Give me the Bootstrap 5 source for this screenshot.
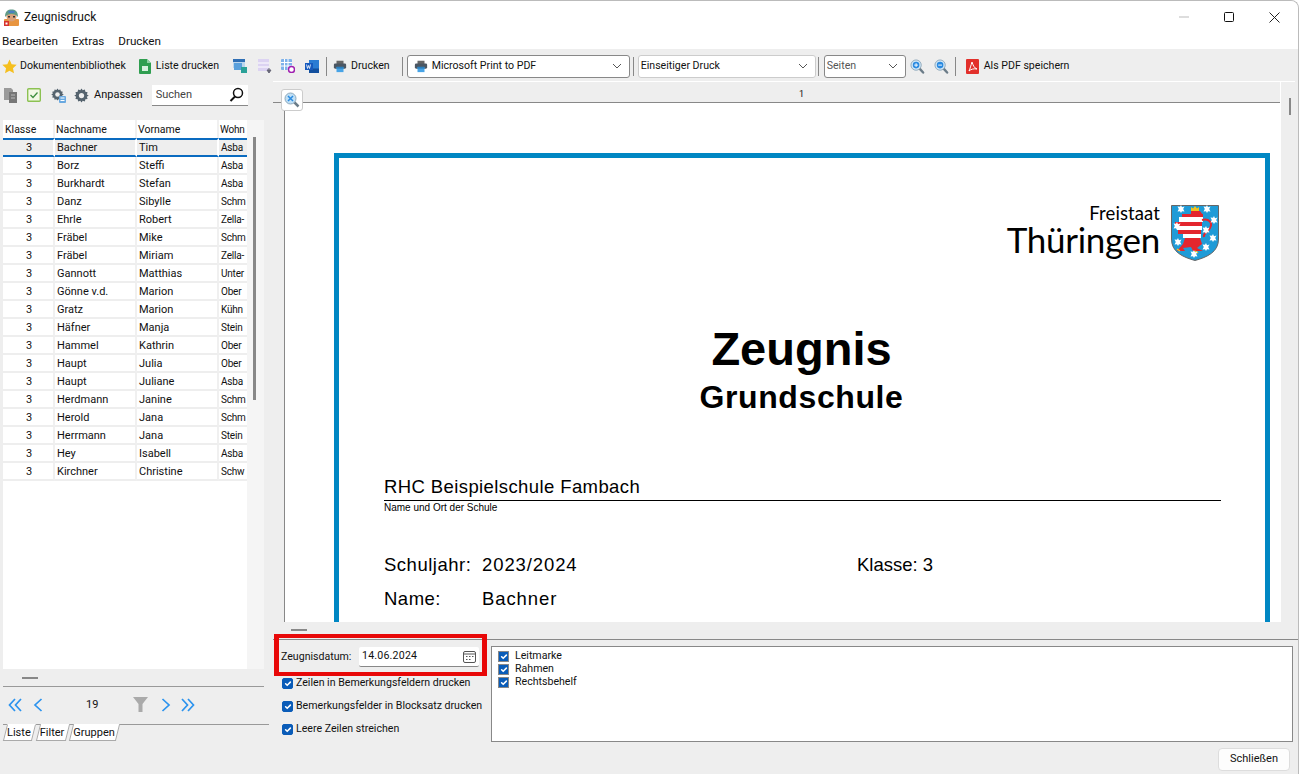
<!DOCTYPE html>
<html lang="de">
<head>
    <meta charset="UTF-8">
    <title>Zeugnisdruck</title>
    <link href="https://cdn.jsdelivr.net/npm/bootstrap@5.3.0/dist/css/bootstrap.min.css" rel="stylesheet">
    <style>
        html, body { height: 100%; overflow: hidden; background: #fff; }
        body { font-family: Roboto, "Liberation Sans", sans-serif; font-size: 11px; color: #111; line-height: 1.2; }
        svg { display: block; flex: none; }
        .app-window { width: 1299px; height: 774px; background: #eee; border-top: 1px solid #bbb; border-right: 1px solid #bbb; border-top-right-radius: 8px; overflow: hidden; }
        .title-bar { height: 32px; background: #fff; padding-left: 3px; font-size: 12px; flex: none; }
        .title-bar span { margin-left: 4px; }
        .win-btns { margin-left: auto; gap: 35px; padding-right: 18px; }
        .menu-bar { height: 16px; background: #fff; padding-left: 2px; gap: 14px; font-size: 11.700px; flex: none; }
        .tool-bar { height: 32px; padding: 2px 0 0 2px; flex: none; font-size: 10.600px; }
        .tool-sep { width: 1px; height: 19px; background: #888; }
        .fake-select { height: 23px; background: #fff; border: 1px solid #888; border-radius: 3px; padding: 0 7px 0 6px; }
        .fake-select.soft { border-color: #ccc; padding-left: 2px; }
        .fake-select .chev { margin-left: auto; }
        .work-area { height: 693px; }
        .left-pane { width: 272px; flex: none; padding: 0 0 0 3px; }
        .left-tools { height: 39px; padding: 1px 0 12px; }
        .search-box { width: 96px; height: 21px; margin-left: 9px; background: #fff; border-bottom: 1px solid #888; padding: 0 4px; color: #444; }
        .search-box svg { margin-left: auto; }
        .list-box { width: 261px; height: 549px; background: #fff; position: relative; overflow: hidden; }
        .list-track { position: absolute; left: 244px; top: 0; bottom: 0; width: 17px; background: #f5f5f5; }
        .list-thumb { position: absolute; left: 250px; top: 17px; width: 3px; height: 263px; background: #888; }
        .pupil-table { width: 244px; table-layout: fixed; margin: 0; border-collapse: separate; border-spacing: 0; --bs-table-bg: transparent; }
        .pupil-table th, .pupil-table td { padding: 1px 0 0 1px; height: 18px; font-size: 10.500px; font-weight: 400; line-height: 15px; white-space: nowrap; overflow: hidden; color: #111; border-bottom: 2px solid #f0f0f0; border-right: 2px solid #f0f0f0; vertical-align: middle; }
        .pupil-table td { border-bottom-color: #eee; padding-left: 2px; font-size: 11px; }
        .pupil-table th { border-bottom: 0; }
        .pupil-table th:first-child { padding-left: 2px; }
        .pupil-table td:first-child { text-align: center; }
        .pupil-table th:last-child, .pupil-table td:last-child { font-size: 10px; border-right: 0; letter-spacing: -.2px; }
        .pupil-table tr.sel td { background: #eee; padding-top: 0; border-top: 2px solid #0a6bc0; border-bottom: 2px solid #0a6bc0; border-right-color: #fff; height: 19px; line-height: 14px; }
        .split-foot { width: 261px; height: 18px; border-bottom: 1px solid #999; padding-left: 19px; flex: none; }
        .split-grip { width: 16px; height: 2px; background: #888; }
        .pager { width: 261px; height: 37px; position: relative; flex: none; }
        .pager b { font-weight: 400; position: absolute; left: 83px; top: 11px; }
        .pager svg { position: absolute; top: 10px; }
        .tab-strip { height: 18px; border-top: 1px solid #999; padding-left: 3px; gap: 7px; margin-right: 3px; flex: none; }
        .tab-shape { position: relative; padding: 0 1px; height: 16px; line-height: 15px; z-index: 0; }
        .tab-shape::before { content: ""; position: absolute; inset: -1px -2px 0 -1px; background: #fff; border: 1px solid #aaa; border-top: 0; transform: skewX(-14deg); z-index: -1; }
        .tab-shape.on::before { border-top: 1px solid #fff; }
        .right-pane { flex: 1; min-width: 0; padding-left: 1px; }
        .preview-box { height: 541px; background: #fff; border-top: 1px solid #fff; position: relative; overflow: hidden; margin-right: 3px; flex: none; }
        .preview-left { width: 12px; background: #eee; border-right: 1px solid #888; flex: none; }
        .ruler-top { height: 22px; background: #eee; border-bottom: 1px solid #888; margin-right: 15px; font-size: 9px; text-align: center; padding: 7px 0 0 50px; line-height: 11px; }
        .preview-scroll { width: 15px; background: #eee; flex: none; border-left: 1px solid #fff; position: relative; margin-top: -22px; }
        .preview-scroll i { position: absolute; left: 8px; top: 17px; width: 2px; height: 17px; background: #888; }
        .zoom-fit { position: absolute; left: 8px; top: 7px; width: 22px; height: 22px; background: #fff; border: 1px solid #ccc; border-radius: 3px; padding: 2px; z-index: 1; }
        .doc-page { margin: 50px 0 0 49px; width: 936px; height: 520px; border: 5px solid #0087c3; padding: 47px 46px 0 45px; color: #000; font-family: "Liberation Sans", sans-serif; }
        .state-logo { height: 56px; }
        .state-words { text-align: right; margin-right: 11px; font-family: Lato, "Liberation Sans", sans-serif; }
        .state-words small { display: block; font-size: 18.500px; line-height: 16px; font-weight: 400; letter-spacing: .1px; }
        .state-words strong { display: block; font-size: 35px; line-height: 36px; font-weight: 400; letter-spacing: -.3px; }
        .doc-title { font-size: 47px; font-weight: 700; line-height: 56px; text-align: center; margin-top: 60px; }
        .doc-sub { font-size: 32px; font-weight: 700; line-height: 38px; text-align: center; letter-spacing: .6px; margin-top: 1px; }
        .school-line { font-size: 18.500px; line-height: 24px; margin: 59px -2px 0 0; border-bottom: 1px solid #000; height: 26px; padding-top: 0; letter-spacing: .4px; }
        .school-note { font-size: 10px; line-height: 14px; }
        .doc-row { font-size: 18.500px; line-height: 24px; height: 34px; letter-spacing: .5px; }
        .doc-row .lbl { width: 98px; }
        .doc-row .val { width: 375px; letter-spacing: .9px; }
        .doc-row .kl { letter-spacing: 0; }
        .split-bar { height: 18px; border-bottom: 1px solid #888; padding: 0 0 1px 18px; flex: none; }
        .bottom-area { height: 134px; position: relative; flex: none; font-size: 10.600px; }
        .opts-col { width: 218px; padding: 7px 0 0 9px; flex: none; }
        .red-frame { position: absolute; left: 1px; top: -6px; width: 213px; height: 42px; border: 4px solid #e80808; border-left-width: 5px; border-right-width: 5px; pointer-events: none; }
        .date-row { height: 20px; margin-bottom: 5px; margin-left: -1px; }
        .date-label { width: 78px; flex: none; }
        .date-input { width: 120px; height: 20px; background: #fff; border-bottom: 1px solid #888; border-radius: 2px; padding: 0 3px; letter-spacing: .2px; }
        .date-input svg { margin-left: auto; }
        .opt-check { height: 23px; white-space: nowrap; margin: 0; padding: 0; min-height: 0; gap: 3px; }
        .form-check-input.tick { width: 11px; height: 11px; margin: 0; float: none; flex: none; border-radius: 2px; background-color: #0a5cb8; border-color: #0a5cb8; background-size: 10px; }
        .form-check-input.tick.box { border-radius: 0; border-color: #888; background-color: #0a5cb8; }
        .mark-box { position: absolute; left: 218px; top: 6px; width: 802px; height: 96px; background: #fff; border: 1px solid #888; padding: 3px 6px; }
        .mark-box .opt-check { height: 13px; gap: 6px; }
        .close-btn { position: absolute; right: 8px; top: 108px; width: 72px; height: 23px; font-size: 11px; padding: 0; background: #fdfdfd; border: 1px solid #ddd; border-radius: 4px; color: #111; }
    </style>
</head>
<body>
<svg width="0" height="0" style="position:absolute">
    <defs>
        <symbol id="ic-printer" viewBox="0 0 16 16"><rect x="4" y="2" width="8" height="4" fill="#666"/><rect x="1" y="5" width="14" height="6" rx="1.500" fill="#4b5763"/><rect x="4" y="9" width="8" height="6" fill="#47a3e6"/><rect x="4" y="9" width="8" height="2" fill="#2b7fbd"/></symbol>
        <symbol id="ic-chev" viewBox="0 0 10 6"><path d="M1 1l4 4 4-4" fill="none" stroke="#555"/></symbol>
        <symbol id="ic-mag-plus" viewBox="0 0 16 16"><path d="M10 10l4 4.500" stroke="#6b7c88" stroke-width="2.500" stroke-linecap="round"/><circle cx="6.500" cy="6.500" r="5.500" fill="#cfe6f7" stroke="#8fa9bb"/><circle cx="6.500" cy="6.500" r="3.500" fill="#2a8ae0"/><path d="M4.500 6.500h4M6.500 4.500v4" stroke="#fff"/></symbol>
        <symbol id="ic-mag-minus" viewBox="0 0 16 16"><path d="M10 10l4 4.500" stroke="#6b7c88" stroke-width="2.500" stroke-linecap="round"/><circle cx="6.500" cy="6.500" r="5.500" fill="#cfe6f7" stroke="#8fa9bb"/><circle cx="6.500" cy="6.500" r="3.500" fill="#2a8ae0"/><path d="M4.500 6.500h4" stroke="#fff"/></symbol>
        <symbol id="ic-gear" viewBox="0 0 16 16"><path d="M8 .5l1.300 2 2.300-.8.500 2.400 2.400.5-.8 2.300 2 1.100-2 1.300.8 2.300-2.400.5-.5 2.400-2.300-.8L8 15.500l-1.300-1.800-2.300.8-.5-2.400-2.400-.5.800-2.300-2-1.300 2-1.100-.8-2.300 2.400-.5.500-2.400 2.300.8z" fill="#55636e"/><circle cx="8" cy="8" r="2.800" fill="#eee"/></symbol>
        <symbol id="ic-dbl" viewBox="0 0 14 16"><path d="M7 2L1.500 8 7 14M13 2L7.500 8 13 14" fill="none" stroke="#2b93ee" stroke-width="1.700"/></symbol>
        <symbol id="ic-one" viewBox="0 0 10 16"><path d="M8.500 2L2 8l6.500 6" fill="none" stroke="#2b93ee" stroke-width="1.700"/></symbol>
        <symbol id="ic-star6" viewBox="-4 -4 8 8"><path d="M0-4l1 2.300L3.500-2.500 2.200 0l1.300 2.500L1 2.300 0 4-1 2.300-3.500 2.500-2.200 0-3.500-2.500-1-2.300z" fill="#fff"/></symbol>
    </defs>
</svg>

<div class="app-window d-flex flex-column">
    <div class="title-bar d-flex align-items-center">
        <svg width="17" height="17" viewBox="0 0 17 17"><rect x="1" y="10" width="15" height="7" rx="1" fill="#e8953f"/><circle cx="8.500" cy="7.500" r="5" fill="#d9a07a"/><path d="M2 8C2 2 5 .5 8.500 .5S15 2 15 8C12 4 5 4 2 8z" fill="#5f9a86"/><path d="M5 2.500C7 1 10 1 12 2.500L11 4H6z" fill="#4a7fc0"/><rect x="5" y="7" width="2" height="1.500" fill="#333"/><rect x="10" y="7" width="2" height="1.500" fill="#333"/><rect x="1" y="12" width="5" height="5" fill="#d6322c"/><rect x="2.500" y="13.500" width="2" height="2" fill="#fff"/></svg>
        <span>Zeugnisdruck</span>
        <div class="win-btns d-flex align-items-center">
            <svg width="10" height="10" viewBox="0 0 10 10"><path d="M0 5h10" stroke="#bbb"/></svg>
            <svg width="10" height="10" viewBox="0 0 10 10"><rect x=".5" y=".5" width="9" height="9" rx="1" fill="none" stroke="#111"/></svg>
            <svg width="11" height="11" viewBox="0 0 11 11"><path d="M.5 .5l10 10M10.500 .5l-10 10" stroke="#222"/></svg>
        </div>
    </div>
    <div class="menu-bar d-flex align-items-center">
        <span>Bearbeiten</span><span>Extras</span><span>Drucken</span>
    </div>

    <div class="tool-bar d-flex align-items-center">
        <svg width="15" height="15" viewBox="0 0 16 16"><path d="M8 .5l2.300 5 5.400.6-4 3.700 1.100 5.400L8 12.500l-4.800 2.700 1.100-5.400-4-3.700 5.400-.6z" fill="#f5bf1e"/></svg>
        <span style="margin-left:3px">Dokumentenbibliothek</span>
        <svg width="12" height="15" viewBox="0 0 12 15" style="margin-left:13px"><path d="M0 1a1 1 0 011-1h7l4 4v10a1 1 0 01-1 1H1a1 1 0 01-1-1z" fill="#2f9e50"/><path d="M8 0l4 4H8z" fill="#8dd0a2"/><rect x="3" y="7" width="6" height="5" fill="#d7f0de"/></svg>
        <span style="margin-left:5px">Liste drucken</span>
        <svg width="14" height="14" viewBox="0 0 14 14" style="margin-left:14px"><rect y="0" width="12" height="3" fill="#2f6fb5"/><rect y="3" width="12" height="6" fill="#bcd6ee"/><rect x="1" y="4" width="8" height="7" fill="#5aa0dc"/><rect x="8" y="8" width="6" height="6" fill="#2aa198"/></svg>
        <svg width="14" height="14" viewBox="0 0 14 14" style="margin-left:11px"><rect width="11" height="12" fill="#dcd3f2"/><path d="M0 4h11M0 8h11" stroke="#fff"/><path d="M11 9v3M9 11l2 3 2-3z" fill="#667" stroke="#667"/></svg>
        <svg width="14" height="14" viewBox="0 0 14 14" style="margin-left:9px"><rect width="11" height="11" rx="1" fill="#7fb2ea"/><path d="M0 3.500h11M0 7h11M3.500 0v11M7 0v11" stroke="#fff"/><circle cx="10.500" cy="10.500" r="3" fill="#fff" stroke="#a020b0" stroke-width="1.500"/></svg>
        <svg width="14" height="13" viewBox="0 0 14 13" style="margin-left:10px"><rect x="4" width="10" height="13" fill="#2b7cd3"/><rect x="4" y="8.500" width="10" height="4.500" fill="#124f9e"/><rect y="3" width="8" height="7" fill="#185abd"/><path d="M1.500 4.500l1 4 1-3 1 3 1-4" fill="none" stroke="#fff" stroke-width=".8"/></svg>
        <div class="tool-sep" style="margin-left:7px"></div>
        <svg width="14" height="14" style="margin-left:6px"><use href="#ic-printer"/></svg>
        <span style="margin-left:4px">Drucken</span>
        <div class="tool-sep" style="margin-left:12px"></div>
        <div class="fake-select d-flex align-items-center" style="margin-left:4px;width:223px">
            <svg width="14" height="14" class="me-1"><use href="#ic-printer"/></svg>Microsoft Print to PDF
            <svg class="chev" width="10" height="6"><use href="#ic-chev"/></svg>
        </div>
        <div class="tool-sep" style="margin-left:3px"></div>
        <div class="fake-select soft d-flex align-items-center" style="margin-left:4px;width:178px">Einseitiger Druck
            <svg class="chev" width="10" height="6"><use href="#ic-chev"/></svg>
        </div>
        <div class="tool-sep" style="margin-left:2px"></div>
        <div class="fake-select d-flex align-items-center" style="margin-left:5px;width:82px;padding-left:2px;color:#555">Seiten
            <svg class="chev" width="10" height="6"><use href="#ic-chev"/></svg>
        </div>
        <svg width="15" height="15" style="margin-left:4px"><use href="#ic-mag-plus"/></svg>
        <svg width="15" height="15" style="margin-left:9px"><use href="#ic-mag-minus"/></svg>
        <div class="tool-sep" style="margin-left:6px"></div>
        <svg width="13" height="15" viewBox="0 0 13 15" style="margin-left:10px"><rect width="13" height="15" rx="1" fill="#e2302b"/><path d="M6 3c1 3 2 6 5 7-3-.5-6 0-8 2 1-2 2-6 3-9z" fill="none" stroke="#fff"/></svg>
        <span style="margin-left:5px">Als PDF speichern</span>
    </div>

    <div class="work-area d-flex">
        <div class="left-pane d-flex flex-column">
            <div class="left-tools d-flex align-items-center">
                <svg width="15" height="15" viewBox="0 0 15 15"><path d="M1 0h7l2 2v10H1z" fill="#9a9a9a"/><rect x="6" y="4" width="8" height="11" fill="#777"/><path d="M8 7h4M8 10h4" stroke="#bbb"/></svg>
                <svg width="14" height="14" viewBox="0 0 14 14" style="margin-left:9px"><rect x=".7" y=".7" width="12.600" height="12.600" rx="1" fill="#f2f8e6" stroke="#8cc152" stroke-width="1.400"/><path d="M3.500 7l2.500 2.500 4.500-5" fill="none" stroke="#3f8f3f" stroke-width="1.300"/></svg>
                <svg width="15" height="15" viewBox="0 0 15 15" style="margin-left:10px"><use href="#ic-gear" width="13" height="13"/><rect x="8" y="8" width="7" height="7" rx="1" fill="#6aa9e0"/><path d="M9.500 10h4M9.500 12.500h4" stroke="#fff"/></svg>
                <svg width="15" height="15" style="margin-left:8px"><use href="#ic-gear"/></svg>
                <span style="margin-left:5px">Anpassen</span>
                <div class="search-box d-flex align-items-center">Suchen
                    <svg width="15" height="15" viewBox="0 0 15 15"><circle cx="9" cy="6" r="4.500" fill="none" stroke="#111" stroke-width="1.500"/><path d="M6 9.500L1.500 14" stroke="#111" stroke-width="2"/></svg>
                </div>
            </div>
            <div class="list-box">
                <div class="list-track"></div>
                <div class="list-thumb"></div>
                <table class="table pupil-table">
                    <colgroup><col style="width:52px"><col style="width:82px"><col style="width:82px"><col></colgroup>
                    <thead><tr><th>Klasse</th><th>Nachname</th><th>Vorname</th><th>Wohn</th></tr></thead>
                    <tbody>
                        <tr class="sel"><td>3</td><td>Bachner</td><td>Tim</td><td>Asba</td></tr>
                        <tr><td>3</td><td>Borz</td><td>Steffi</td><td>Asba</td></tr>
                        <tr><td>3</td><td>Burkhardt</td><td>Stefan</td><td>Asba</td></tr>
                        <tr><td>3</td><td>Danz</td><td>Sibylle</td><td>Schm</td></tr>
                        <tr><td>3</td><td>Ehrle</td><td>Robert</td><td>Zella-</td></tr>
                        <tr><td>3</td><td>Fräbel</td><td>Mike</td><td>Schm</td></tr>
                        <tr><td>3</td><td>Fräbel</td><td>Miriam</td><td>Zella-</td></tr>
                        <tr><td>3</td><td>Gannott</td><td>Matthias</td><td>Unter</td></tr>
                        <tr><td>3</td><td>Gönne v.d.</td><td>Marion</td><td>Ober</td></tr>
                        <tr><td>3</td><td>Gratz</td><td>Marion</td><td>Kühn</td></tr>
                        <tr><td>3</td><td>Häfner</td><td>Manja</td><td>Stein</td></tr>
                        <tr><td>3</td><td>Hammel</td><td>Kathrin</td><td>Ober</td></tr>
                        <tr><td>3</td><td>Haupt</td><td>Julia</td><td>Ober</td></tr>
                        <tr><td>3</td><td>Haupt</td><td>Juliane</td><td>Asba</td></tr>
                        <tr><td>3</td><td>Herdmann</td><td>Janine</td><td>Schm</td></tr>
                        <tr><td>3</td><td>Herold</td><td>Jana</td><td>Schm</td></tr>
                        <tr><td>3</td><td>Herrmann</td><td>Jana</td><td>Stein</td></tr>
                        <tr><td>3</td><td>Hey</td><td>Isabell</td><td>Asba</td></tr>
                        <tr><td>3</td><td>Kirchner</td><td>Christine</td><td>Schw</td></tr>
                    </tbody>
                </table>
            </div>
            <div class="split-foot d-flex align-items-center"><div class="split-grip"></div></div>
            <div class="pager">
                <svg width="14" height="16" style="left:5px"><use href="#ic-dbl"/></svg>
                <svg width="10" height="16" style="left:30px"><use href="#ic-one"/></svg>
                <b>19</b>
                <svg width="15" height="15" viewBox="0 0 15 15" style="left:130px"><path d="M0 0h15L9.500 7v8h-4V7z" fill="#aaa"/></svg>
                <svg width="10" height="16" style="left:158px;transform:scaleX(-1)"><use href="#ic-one"/></svg>
                <svg width="14" height="16" style="left:178px;transform:scaleX(-1)"><use href="#ic-dbl"/></svg>
            </div>
            <div class="tab-strip d-flex">
                <div class="tab-shape on">Liste</div>
                <div class="tab-shape">Filter</div>
                <div class="tab-shape">Gruppen</div>
            </div>
        </div>

        <div class="right-pane d-flex flex-column">
            <div class="preview-box d-flex flex-column">
                <div class="zoom-fit">
                    <svg width="16" height="16" viewBox="0 0 16 16"><path d="M10 10l4.500 4.500" stroke="#6b7c88" stroke-width="2.500"/><circle cx="6.500" cy="6.500" r="5.500" fill="#bfe0f7" stroke="#8fa9bb"/><path d="M4 4l5 5M9 4l-5 5" stroke="#2a8ae0" stroke-width="1.500"/></svg>
                </div>
                <div class="ruler-top">1</div>
                <div class="d-flex flex-grow-1" style="min-height:0">
                    <div class="preview-left"></div>
                    <div class="flex-grow-1 overflow-hidden" style="min-width:0">
                        <div class="doc-page">
                            <div class="state-logo d-flex justify-content-end align-items-start">
                                <div class="state-words"><small>Freistaat</small><strong>Thüringen</strong></div>
                                <svg width="48" height="56" viewBox="0 0 48 56">
                                    <path d="M.5 .5h47V34c0 13-11 18-23.500 21.500C11.500 52 .5 47 .5 34z" fill="#1f9bd7" stroke="#666"/>
                                    <path d="M11 9h21v3H11zM4 17h27v4H4zM7 25h23v4H7zM14 33h15l2 6-5 4 6 3H22l-2-4-8 1 2 3H6l6-7z" fill="#e3262e"/>
                                    <path d="M8 12h24v5H8zM6 21h25v4H6zM12 29h18v4H12z" fill="#fff"/>
                                    <path d="M20 6V2l2 1.500L24 1l2 2.500L28 2v4z" fill="#f2c31d"/>
                                    <path d="M20 6h9l3 4-4 2h-8z" fill="#e3262e"/>
                                    <path d="M31 15c7-2 11 3 8 8s-7 5-6 9" fill="none" stroke="#e3262e" stroke-width="2"/>
                                    <path d="M6 44l3 2M24 46l3 2" stroke="#f2c31d" stroke-width="1.500"/>
                                    <use href="#ic-star6" x="6" y="0" width="8" height="8"/><use href="#ic-star6" x="32" y="0" width="8" height="8"/><use href="#ic-star6" x="39" y="11" width="8" height="8"/><use href="#ic-star6" x="2" y="17" width="8" height="8"/><use href="#ic-star6" x="31" y="21" width="8" height="8"/><use href="#ic-star6" x="3" y="33" width="8" height="8"/><use href="#ic-star6" x="38" y="29" width="8" height="8"/><use href="#ic-star6" x="31" y="38" width="8" height="8"/><use href="#ic-star6" x="19" y="45" width="8" height="8"/>
                                </svg>
                            </div>
                            <div class="doc-title">Zeugnis</div>
                            <div class="doc-sub">Grundschule</div>
                            <div class="school-line">RHC Beispielschule Fambach</div>
                            <div class="school-note">Name und Ort der Schule</div>
                            <div class="doc-row d-flex" style="margin-top:38px"><span class="lbl">Schuljahr:</span><span class="val">2023/2024</span><span class="kl">Klasse:&nbsp;3</span></div>
                            <div class="doc-row d-flex"><span class="lbl">Name:</span><span class="val">Bachner</span></div>
                        </div>
                    </div>
                    <div class="preview-scroll"><i></i></div>
                </div>
            </div>
            <div class="split-bar d-flex align-items-center"><div class="split-grip"></div></div>
            <div class="bottom-area">
                <div class="opts-col">
                    <div class="date-row d-flex align-items-center"><span class="date-label">Zeugnisdatum:</span>
                        <div class="date-input d-flex align-items-center">14.06.2024
                            <svg width="13" height="13" viewBox="0 0 13 13"><rect x=".5" y="1.500" width="12" height="11" rx="1.500" fill="none" stroke="#555"/><path d="M1 4h11" stroke="#555"/><path d="M3 6.500h1.500M6 6.500h1.500M9 6.500h1.500M3 9.500h1.500M6 9.500h1.500" stroke="#555"/></svg>
                        </div>
                    </div>
                    <label class="form-check opt-check d-flex align-items-center"><input class="form-check-input tick" type="checkbox" checked>Zeilen in Bemerkungsfeldern drucken</label>
                    <label class="form-check opt-check d-flex align-items-center"><input class="form-check-input tick" type="checkbox" checked>Bemerkungsfelder in Blocksatz drucken</label>
                    <label class="form-check opt-check d-flex align-items-center"><input class="form-check-input tick" type="checkbox" checked>Leere Zeilen streichen</label>
                </div>
                <div class="red-frame"></div>
                <div class="mark-box">
                    <label class="form-check opt-check d-flex align-items-center"><input class="form-check-input tick box" type="checkbox" checked>Leitmarke</label>
                    <label class="form-check opt-check d-flex align-items-center"><input class="form-check-input tick box" type="checkbox" checked>Rahmen</label>
                    <label class="form-check opt-check d-flex align-items-center"><input class="form-check-input tick box" type="checkbox" checked>Rechtsbehelf</label>
                </div>
                <button type="button" class="btn close-btn">Schließen</button>
            </div>
        </div>
    </div>
</div>

<script src="https://cdn.jsdelivr.net/npm/bootstrap@5.3.0/dist/js/bootstrap.bundle.min.js"></script>
</body>
</html>
